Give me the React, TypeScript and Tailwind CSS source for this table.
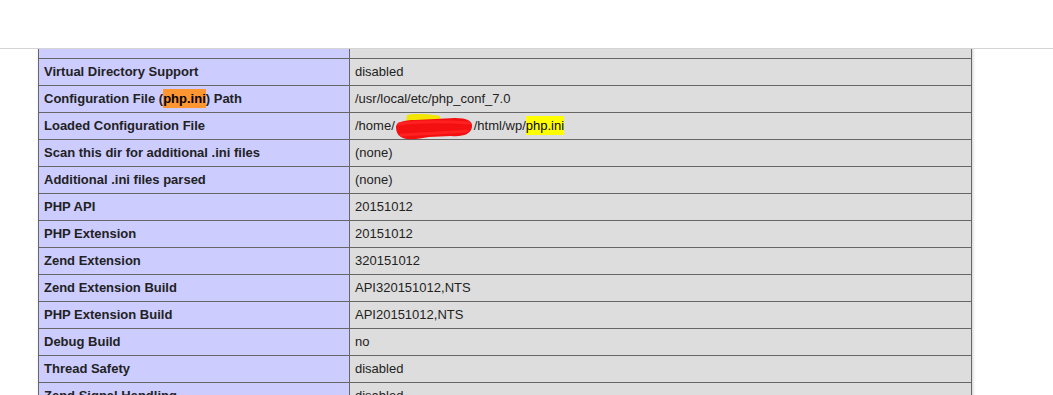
import type { ReactNode } from 'react';

type Row = { label: ReactNode; value: ReactNode };

const Scribble = () => (
    <svg width="79" height="26" viewBox="0 0 79 26" className="inline-block align-middle -my-[6px]">
        <path d="M12 1 C22 -1 34 0 45 2 L46 9 L11 9 Z" fill="#f2e600" />
        <path
            d="M1 13 C1 8 9 6 20 6 L60 4 C72 4 78 7 77 13 C76 20 68 23 56 22 L34 23 C26 24 20 26 12 25 C4 24 1 19 1 13 Z"
            fill="#f41010"
        />
        <path d="M4 10 C20 8 44 7 74 9 M6 21 C24 20 48 19 72 17" stroke="#ff2020" strokeWidth="3" fill="none" strokeLinecap="round" />
    </svg>
);

const ROWS: Row[] = [
    { label: 'Server API', value: 'FPM/FastCGI' },
    { label: 'Virtual Directory Support', value: 'disabled' },
    {
        label: (
            <>
                Configuration File (<span className="bg-[#ff9632] text-black py-[2px]">php.ini</span>) Path
            </>
        ),
        value: '/usr/local/etc/php_conf_7.0',
    },
    {
        label: 'Loaded Configuration File',
        value: (
            <>
                /home/
                <Scribble />
                /html/wp/<span className="bg-[#ffff00] text-black py-[2px]">php.ini</span>
            </>
        ),
    },
    { label: 'Scan this dir for additional .ini files', value: '(none)' },
    { label: 'Additional .ini files parsed', value: '(none)' },
    { label: 'PHP API', value: '20151012' },
    { label: 'PHP Extension', value: '20151012' },
    { label: 'Zend Extension', value: '320151012' },
    { label: 'Zend Extension Build', value: 'API320151012,NTS' },
    { label: 'PHP Extension Build', value: 'API20151012,NTS' },
    { label: 'Debug Build', value: 'no' },
    { label: 'Thread Safety', value: 'disabled' },
    { label: 'Zend Signal Handling', value: 'disabled' },
    { label: 'Zend Memory Manager', value: 'enabled' },
];

export default function App() {
    return (
        <div className="h-[395px] overflow-hidden bg-white text-[13px] text-[#222]" style={{ fontFamily: '"Liberation Sans", Arial, sans-serif' }}>
            <div className="h-[49px] border-b border-[#d4d4d4] bg-white" />
            <div className="h-[346px] overflow-hidden">
                <div className="ml-[38px] -mt-[17px] w-[934px] border-x border-[#666] shadow-[1px_2px_3px_#ccc]">
                    {ROWS.map((row, i) => (
                        <div key={i} className="flex h-[27px] border-b border-[#666]">
                            <div className="flex w-[311px] shrink-0 items-center whitespace-nowrap border-r border-[#666] bg-[#ccccff] px-[5px] font-bold">
                                <span>{row.label}</span>
                            </div>
                            <div className="flex flex-1 items-center whitespace-nowrap bg-[#dddddd] px-[5px]">
                                <span>{row.value}</span>
                            </div>
                        </div>
                    ))}
                </div>
            </div>
        </div>
    );
}
